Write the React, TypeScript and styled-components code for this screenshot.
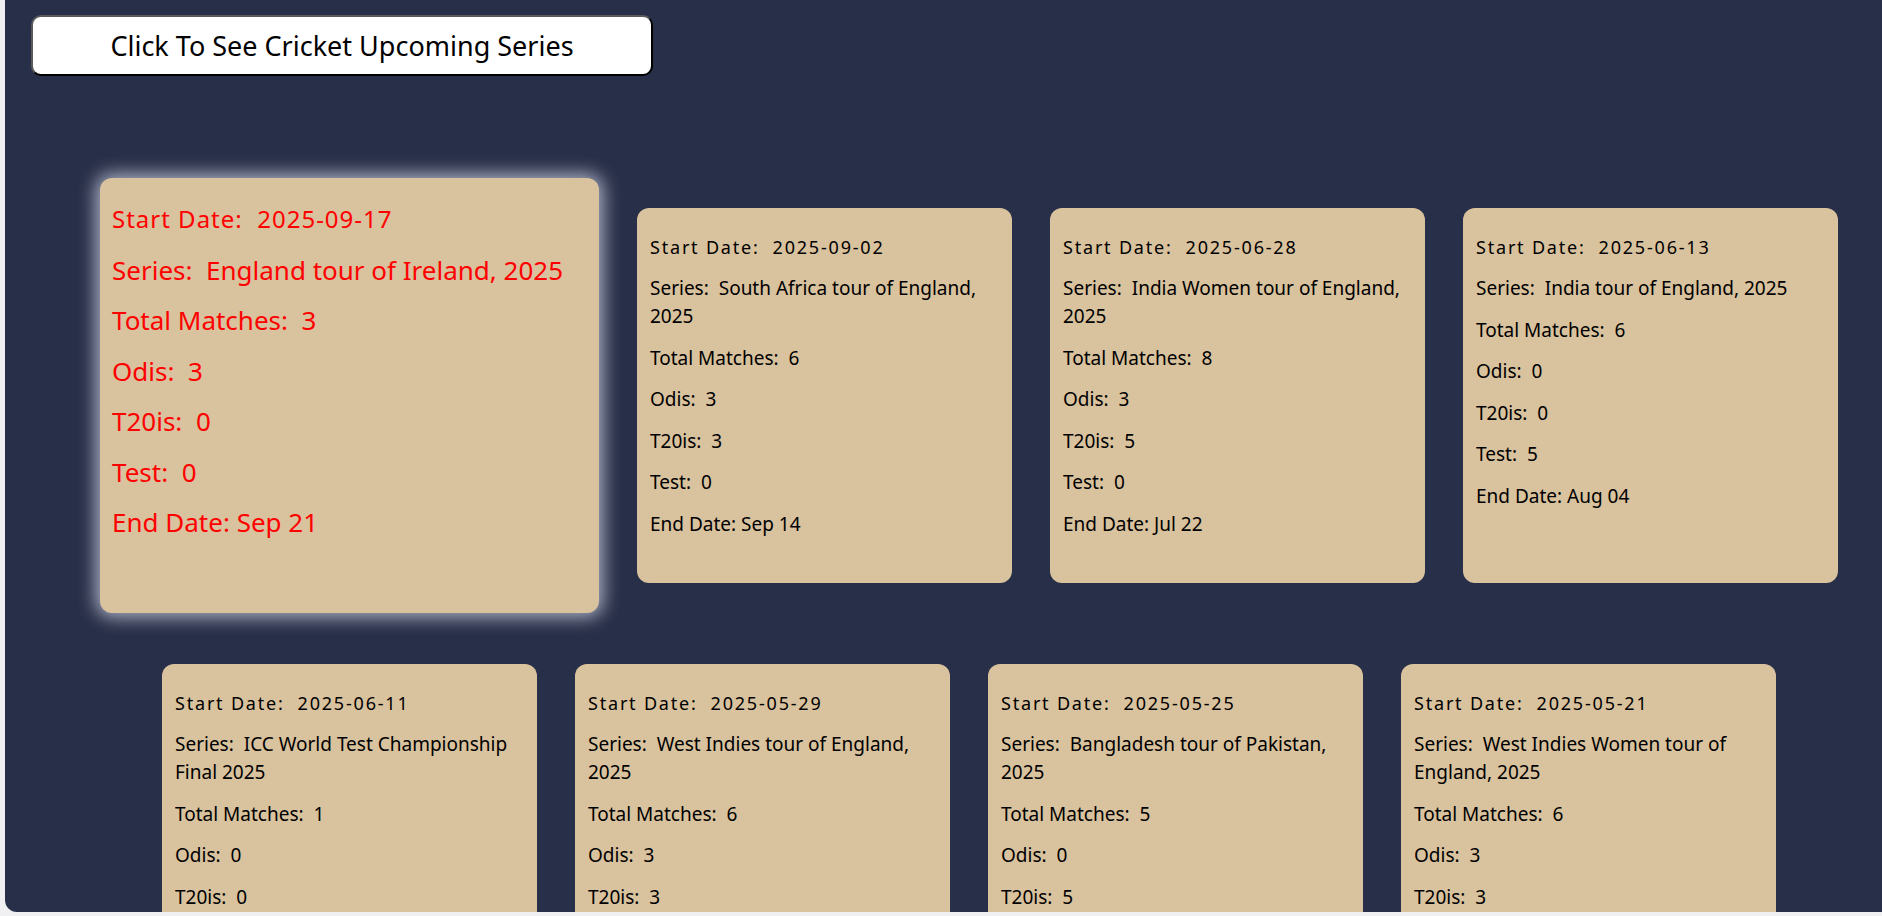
import React from 'react';
import styled, { createGlobalStyle } from 'styled-components';

const GlobalStyle = createGlobalStyle`
  html, body {
    margin: 0;
    padding: 0;
    background: #f0f0f2;
    font-family: 'Noto Sans', 'Liberation Sans', sans-serif;
  }
`;

const StyledPage = styled.div`
  margin: 0 0 4px 5px;
  height: 912px;
  background: #282f48;
  border-bottom-left-radius: 12px;
  overflow: hidden;
  box-sizing: border-box;
  padding: 15px 0 0 26px;
`;

const StyledButton = styled.button`
  width: 622px;
  height: 61px;
  background: #ffffff;
  border: 2px solid #000;
  border-top-color: #5a5a5a;
  border-left-color: #5a5a5a;
  border-radius: 10px;
  font-family: 'Noto Sans', 'Liberation Sans', sans-serif;
  font-size: 27px;
  color: #000;
  cursor: pointer;
`;

const StyledGrid = styled.div`
  margin-top: 102px;
  margin-left: -26px;
  padding-left: 51px;
  display: flex;
  flex-wrap: wrap;
  justify-content: center;
  align-items: center;
  column-gap: 38px;
  row-gap: 51px;
`;

const StyledCard = styled.div<{ $active?: boolean }>`
  box-sizing: border-box;
  width: ${(p) => (p.$active ? '499px' : '375px')};
  height: ${(p) => (p.$active ? '435px' : '375px')};
  padding: ${(p) => (p.$active ? '7.5px 12px 0' : '11px 13px 0')};
  background: #d9c29e;
  border-radius: 12px;
  color: ${(p) => (p.$active ? '#ff0000' : '#000')};
  font-size: ${(p) => (p.$active ? '26px' : '19px')};
  line-height: ${(p) => (p.$active ? '34px' : '28px')};
  box-shadow: ${(p) => (p.$active ? '0 0 18px 4px rgba(220, 225, 240, 0.75)' : 'none')};
  transition: 0.2s;
  cursor: pointer;
`;

const StyledLine = styled.p<{ $active?: boolean; $spaced?: boolean }>`
  margin: ${(p) => (p.$active ? '16.5px 0' : '13.5px 0')};
  font-size: ${(p) => (p.$spaced ? (p.$active ? '24px' : '18px') : 'inherit')};
  letter-spacing: ${(p) => (p.$spaced ? (p.$active ? '1px' : '1.8px') : 'normal')};
`;

interface Series {
  start: string;
  name: string;
  total: number;
  odis: number;
  t20s: number;
  tests: number;
  end: string;
}

const SERIES: Series[] = [
  { start: '2025-09-17', name: 'England tour of Ireland, 2025', total: 3, odis: 3, t20s: 0, tests: 0, end: 'Sep 21' },
  { start: '2025-09-02', name: 'South Africa tour of England, 2025', total: 6, odis: 3, t20s: 3, tests: 0, end: 'Sep 14' },
  { start: '2025-06-28', name: 'India Women tour of England, 2025', total: 8, odis: 3, t20s: 5, tests: 0, end: 'Jul 22' },
  { start: '2025-06-13', name: 'India tour of England, 2025', total: 6, odis: 0, t20s: 0, tests: 5, end: 'Aug 04' },
  { start: '2025-06-11', name: 'ICC World Test Championship Final 2025', total: 1, odis: 0, t20s: 0, tests: 1, end: 'Jun 15' },
  { start: '2025-05-29', name: 'West Indies tour of England, 2025', total: 6, odis: 3, t20s: 3, tests: 0, end: 'Jun 10' },
  { start: '2025-05-25', name: 'Bangladesh tour of Pakistan, 2025', total: 5, odis: 0, t20s: 5, tests: 0, end: 'Jun 03' },
  { start: '2025-05-21', name: 'West Indies Women tour of England, 2025', total: 6, odis: 3, t20s: 3, tests: 0, end: 'Jun 08' }
];

const SeriesCard: React.FC<{ series: Series; active?: boolean }> = ({ series, active }) => (
  <StyledCard $active={active}>
    <StyledLine $active={active} $spaced>
      Start Date:{'\u00a0 '}{series.start}
    </StyledLine>
    <StyledLine $active={active}>Series:{'\u00a0 '}{series.name}</StyledLine>
    <StyledLine $active={active}>Total Matches:{'\u00a0 '}{series.total}</StyledLine>
    <StyledLine $active={active}>Odis:{'\u00a0 '}{series.odis}</StyledLine>
    <StyledLine $active={active}>T20is:{'\u00a0 '}{series.t20s}</StyledLine>
    <StyledLine $active={active}>Test:{'\u00a0 '}{series.tests}</StyledLine>
    <StyledLine $active={active}>End Date: {series.end}</StyledLine>
  </StyledCard>
);

const App: React.FC = () => (
  <>
    <GlobalStyle />
    <StyledPage>
      <StyledButton>Click To See Cricket Upcoming Series</StyledButton>
      <StyledGrid>
        {SERIES.map((s, i) => (
          <SeriesCard key={s.start} series={s} active={i === 0} />
        ))}
      </StyledGrid>
    </StyledPage>
  </>
);

export default App;
